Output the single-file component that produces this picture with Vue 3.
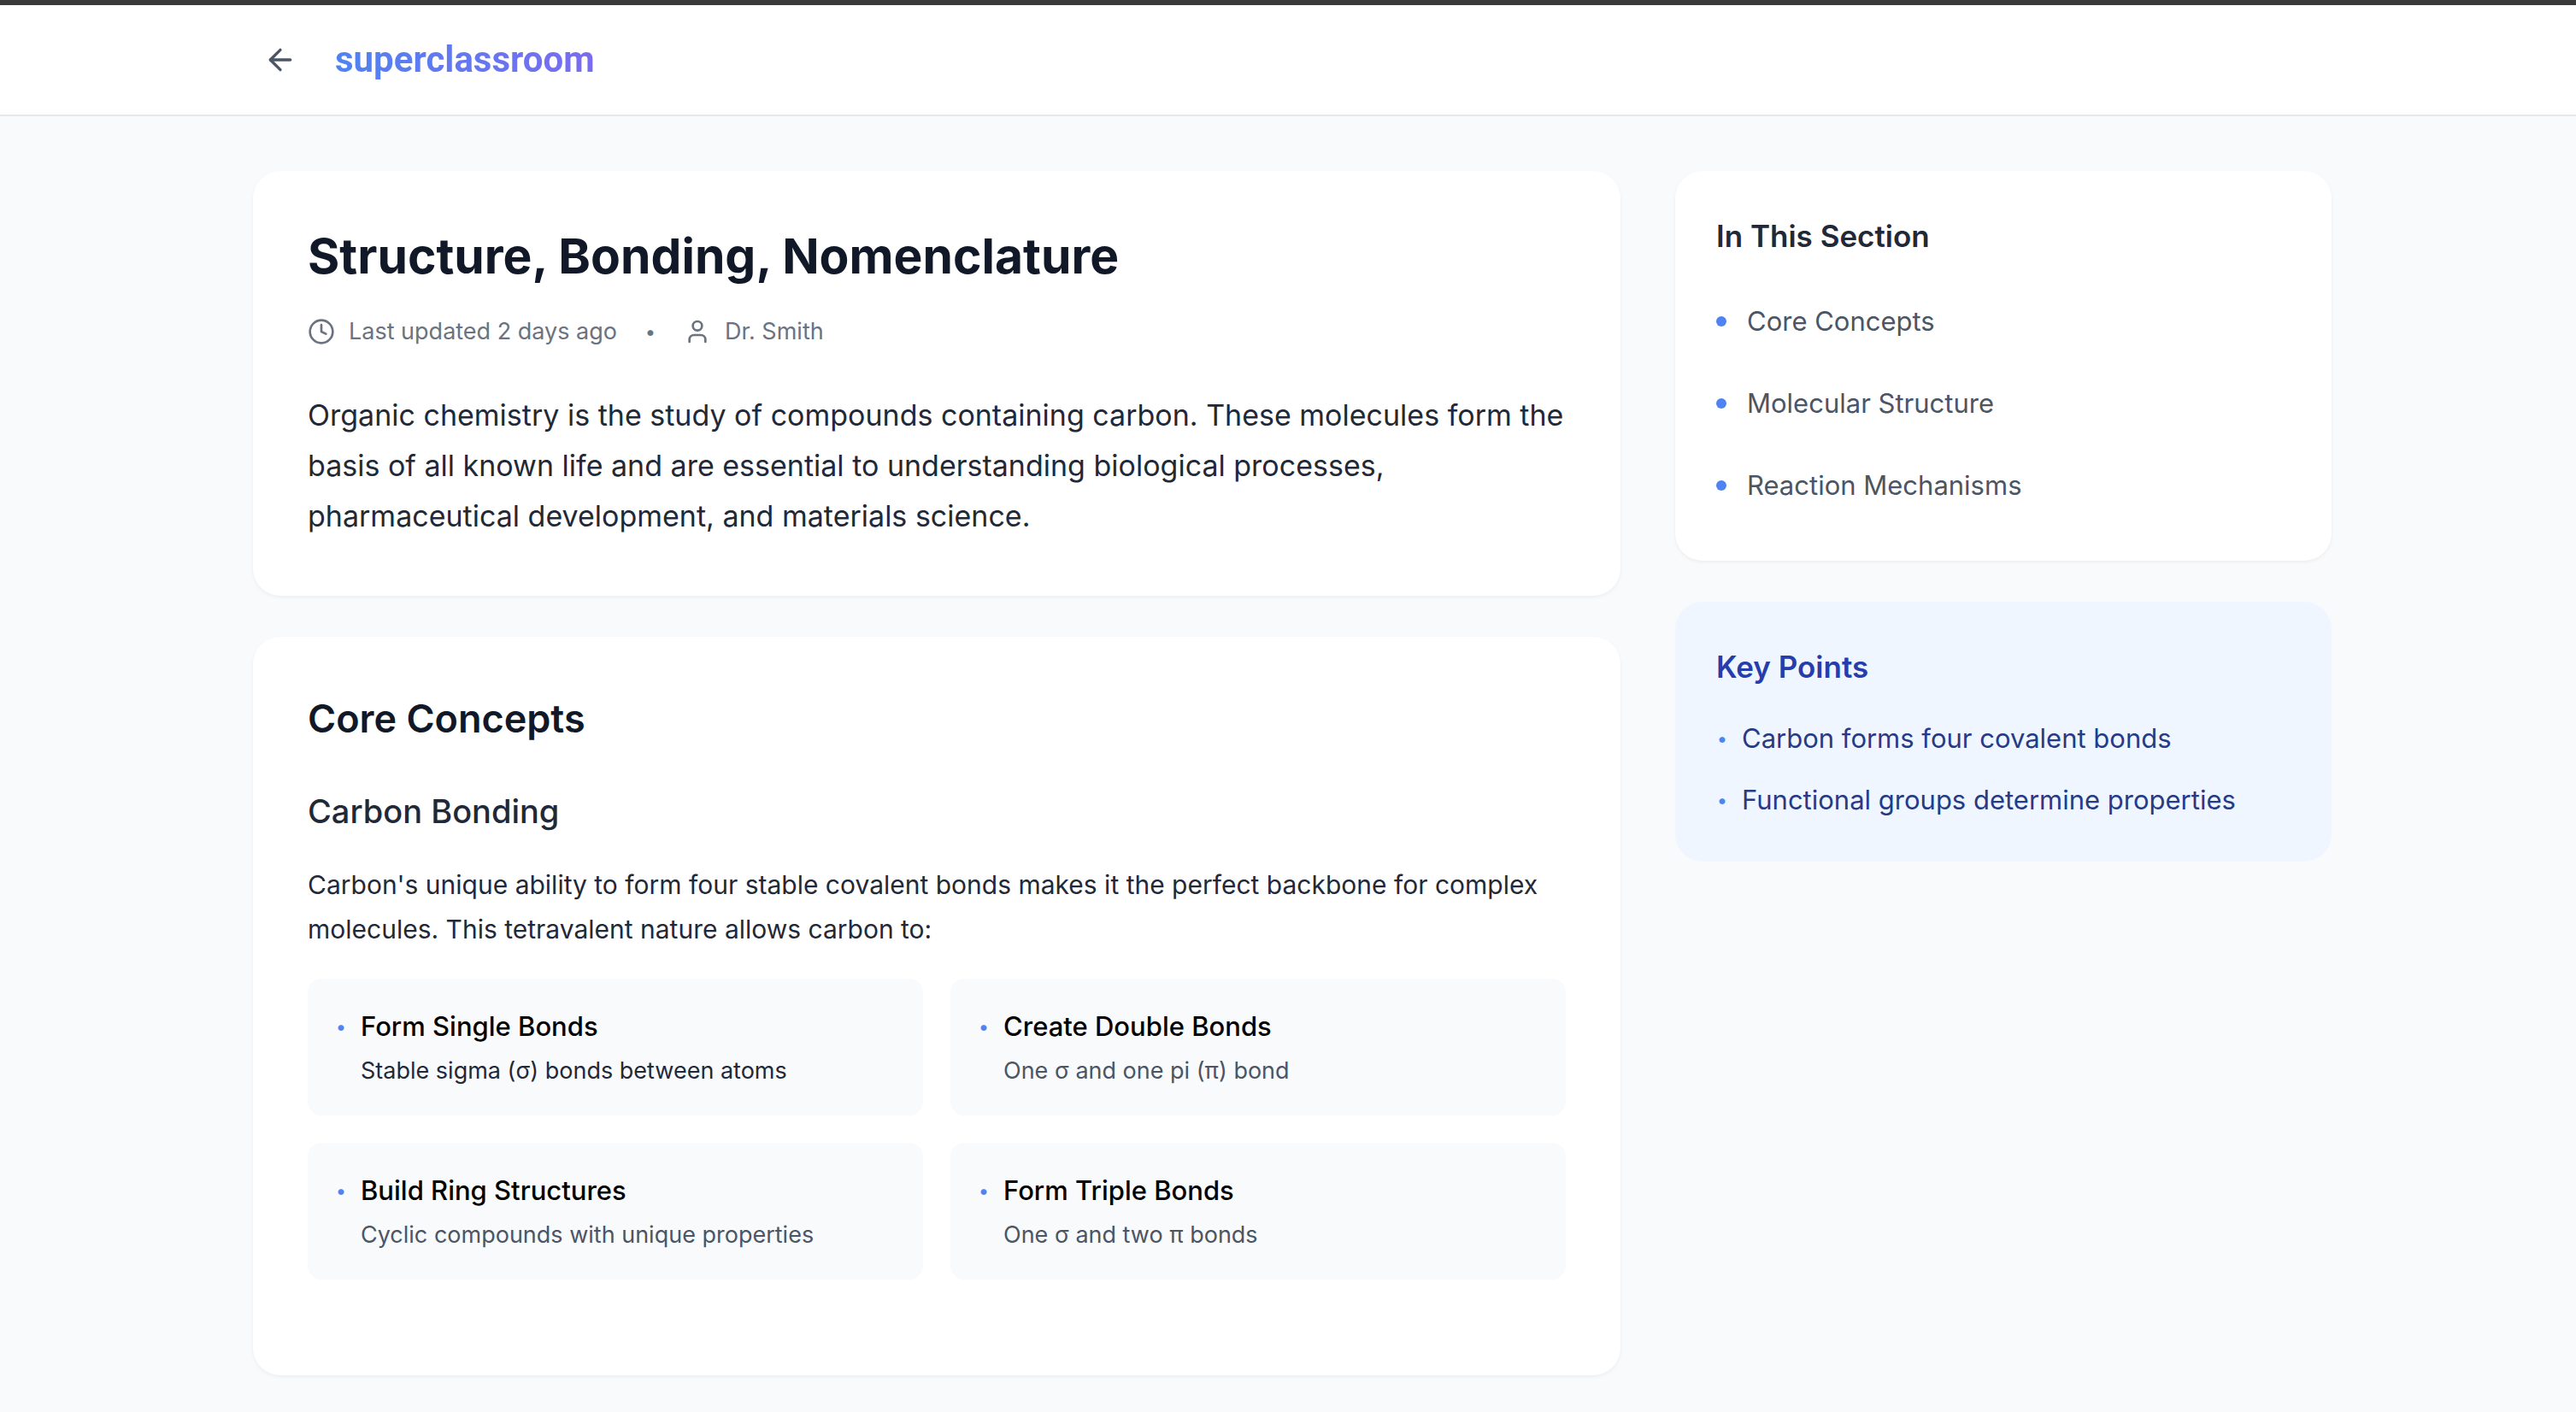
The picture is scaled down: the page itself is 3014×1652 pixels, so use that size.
<script setup>
const sections = ['Core Concepts', 'Molecular Structure', 'Reaction Mechanisms']

const keyPoints = ['Carbon forms four covalent bonds', 'Functional groups determine properties']

const abilities = [
  { title: 'Form Single Bonds', text: 'Stable sigma (σ) bonds between atoms', strong: true },
  { title: 'Create Double Bonds', text: 'One σ and one pi (π) bond' },
  { title: 'Build Ring Structures', text: 'Cyclic compounds with unique properties' },
  { title: 'Form Triple Bonds', text: 'One σ and two π bonds' },
]
</script>

<template>
  <div class="page">
    <header class="topbar">
      <div class="wrap topbar-inner">
        <button class="back" type="button" aria-label="Go back">
          <svg class="icon icon-back" viewBox="0 0 24 24" aria-hidden="true">
            <path d="m12 19-7-7 7-7" />
            <path d="M19 12H5" />
          </svg>
        </button>
        <a class="logo" href="#">superclassroom</a>
      </div>
    </header>

    <main class="wrap layout">
      <div class="column content">
        <article class="card">
          <h1 class="title">Structure, Bonding, Nomenclature</h1>
          <div class="meta">
            <span class="meta-item">
              <svg class="icon" viewBox="0 0 24 24" aria-hidden="true">
                <circle cx="12" cy="12" r="10" />
                <path d="M12 6v6l4 2" />
              </svg>
              Last updated 2 days ago
            </span>
            <span class="bullet">•</span>
            <span class="meta-item">
              <svg class="icon" viewBox="0 0 24 24" aria-hidden="true">
                <path d="M19 21v-2a4 4 0 0 0-4-4H9a4 4 0 0 0-4 4v2" />
                <circle cx="12" cy="7" r="4" />
              </svg>
              Dr. Smith
            </span>
          </div>
          <p class="intro">
            Organic chemistry is the study of compounds containing carbon. These molecules form the
            basis of all known life and are essential to understanding biological processes,
            pharmaceutical development, and materials science.
          </p>
        </article>

        <section id="core-concepts" class="card concepts">
          <h2 class="heading">Core Concepts</h2>
          <h3 class="subheading">Carbon Bonding</h3>
          <p class="body">
            Carbon's unique ability to form four stable covalent bonds makes it the perfect backbone
            for complex molecules. This tetravalent nature allows carbon to:
          </p>
          <ul class="tiles">
            <li v-for="item in abilities" :key="item.title" class="tile">
              <span class="bullet bullet-blue">•</span>
              <div>
                <h4 class="tile-title">{{ item.title }}</h4>
                <p class="tile-text" :class="{ strong: item.strong }">{{ item.text }}</p>
              </div>
            </li>
          </ul>
        </section>
      </div>

      <aside class="column">
        <nav class="card side-card" aria-labelledby="toc-title">
          <h2 id="toc-title" class="side-title">In This Section</h2>
          <ul class="toc">
            <li v-for="name in sections" :key="name">
              <a class="toc-link" href="#core-concepts"><span class="dot"></span>{{ name }}</a>
            </li>
          </ul>
        </nav>

        <section class="card side-card key-card">
          <h2 class="side-title key-title">Key Points</h2>
          <ul class="points">
            <li v-for="point in keyPoints" :key="point" class="point">
              <span class="bullet bullet-blue">•</span>{{ point }}
            </li>
          </ul>
        </section>
      </aside>
    </main>
  </div>
</template>

<style>
body {
  background: #f9fafc;
}
</style>

<style scoped>
.page {
  min-height: 100vh;
  box-sizing: border-box;
  border-top: 6px solid #3a3a3a;
  background: #f9fafc;
  color: #1f2937;
  font-family: Inter, "Noto Sans", sans-serif;
}

h1, h2, h3, h4, p, ul {
  margin: 0;
  padding: 0;
}

ul {
  list-style: none;
}

.topbar {
  padding-left: 10px;
  background: #fff;
  border-bottom: 2px solid #e5e7eb;
}

.wrap {
  box-sizing: border-box;
  max-width: 2560px;
  margin: 0 auto;
  padding: 0 64px;
}

.topbar-inner {
  display: flex;
  align-items: center;
  gap: 32px;
  height: 128px;
}

.back {
  display: flex;
  padding: 12px;
  border: 0;
  border-radius: 16px;
  background: none;
  color: #4b5563;
  cursor: pointer;
}

.icon {
  width: 32px;
  height: 32px;
  flex: none;
  fill: none;
  stroke: currentColor;
  stroke-width: 2;
  stroke-linecap: round;
  stroke-linejoin: round;
}

.icon-back {
  width: 40px;
  height: 40px;
}

.logo {
  font-family: Roboto, "Noto Sans", sans-serif;
  font-size: 42px;
  font-weight: 700;
  line-height: 64px;
  text-decoration: none;
  color: transparent;
  background: linear-gradient(90deg, #4f83f1, #7a6cee);
  background-clip: text;
}

.layout {
  display: grid;
  grid-template-columns: repeat(3, minmax(0, 1fr));
  column-gap: 64px;
  align-items: start;
  max-width: 2570px;
  padding: 64px 64px 0 74px;
}

.content {
  grid-column: span 2;
}

.column {
  display: grid;
  gap: 48px;
}

.card {
  padding: 64px;
  border-radius: 32px;
  background: #fff;
  box-shadow: 0 2px 4px rgba(0, 0, 0, 0.05);
}

.title {
  margin-bottom: 32px;
  font-size: 57px;
  font-weight: 700;
  line-height: 72px;
  color: #111827;
}

.meta {
  display: flex;
  align-items: center;
  gap: 32px;
  margin-bottom: 48px;
  font-size: 27px;
  line-height: 40px;
  color: #6b7280;
}

.meta-item {
  display: flex;
  align-items: center;
  gap: 16px;
}

.bullet {
  flex: none;
  width: 14px;
  font-size: 22px;
  text-align: center;
}

.bullet-blue {
  line-height: 48px;
  color: #4f83f1;
}

.intro {
  font-size: 34px;
  line-height: 59px;
}

.concepts {
  padding-bottom: 112px;
}

.heading {
  margin-bottom: 48px;
  font-size: 45px;
  font-weight: 600;
  line-height: 64px;
  color: #111827;
}

.subheading {
  margin-bottom: 32px;
  font-size: 38px;
  font-weight: 500;
  line-height: 56px;
}

.body {
  margin-bottom: 32px;
  font-size: 30px;
  line-height: 52px;
}

.tiles {
  display: grid;
  grid-template-columns: repeat(2, minmax(0, 1fr));
  gap: 32px;
}

.tile {
  display: flex;
  align-items: flex-start;
  gap: 16px;
  padding: 32px;
  border-radius: 16px;
  background: #f9fafc;
}

.tile-title {
  margin-bottom: 8px;
  font-size: 31px;
  font-weight: 500;
  line-height: 48px;
  color: #000;
}

.tile-text {
  font-size: 27px;
  line-height: 40px;
  color: #4b5563;
}

.tile-text.strong {
  color: #1f2937;
}

.side-card {
  padding: 48px;
}

.side-title {
  margin-bottom: 32px;
  font-size: 35px;
  font-weight: 600;
  line-height: 56px;
}

.toc {
  display: grid;
  gap: 16px;
}

.toc-link {
  display: flex;
  align-items: center;
  gap: 24px;
  padding: 16px 0;
  font-size: 31px;
  line-height: 48px;
  text-decoration: none;
  color: #4b5563;
}

.dot {
  width: 12px;
  height: 12px;
  border-radius: 50%;
  background: #4f83f1;
}

.key-card {
  background: #eff6ff;
  box-shadow: none;
}

.key-title {
  color: #263dab;
}

.points {
  display: grid;
  gap: 24px;
}

.point {
  display: flex;
  gap: 16px;
  font-size: 31px;
  line-height: 48px;
  color: #263a86;
}
</style>
